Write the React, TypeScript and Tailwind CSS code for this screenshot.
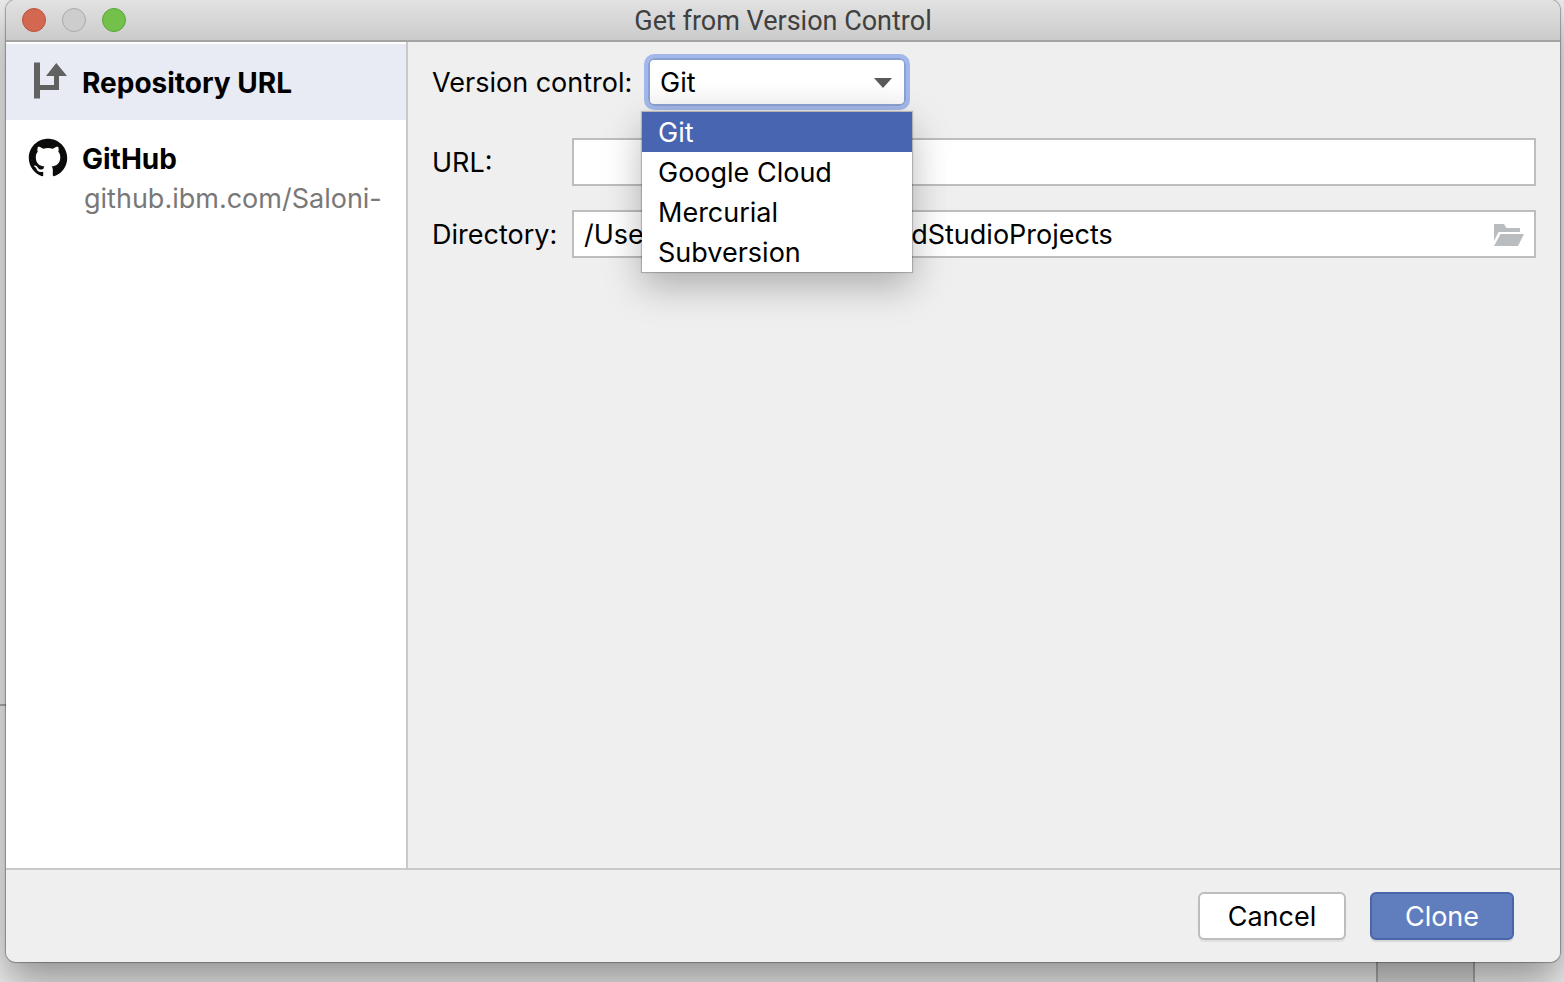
import React, { useState } from "react";

const systems = ["Git", "Google Cloud", "Mercurial", "Subversion"];

function BranchIcon() {
  return (
    <svg width="40" height="40" viewBox="0 0 40 40" fill="#616161" aria-hidden="true">
      <path d="M6 .5h6v22.500h14V14h-8L28.300 1 39 14h-8v14H12v8.500H6z" />
    </svg>
  );
}

function GitHubIcon() {
  return (
    <svg width="40" height="40" viewBox="0 0 16 16" fill="#0b0b0a" aria-hidden="true">
      <path
        transform="translate(.32 .32) scale(.96)"
        d="M8 0C3.58 0 0 3.58 0 8c0 3.54 2.29 6.53 5.47 7.59.4.07.55-.17.55-.38 0-.19-.01-.82-.01-1.49-2.01.37-2.53-.49-2.69-.94-.09-.23-.48-.94-.82-1.13-.28-.15-.68-.52-.01-.53.63-.01 1.08.58 1.23.82.72 1.21 1.87.87 2.33.66.07-.52.28-.87.51-1.07-1.78-.2-3.64-.89-3.64-3.95 0-.87.31-1.59.82-2.15-.08-.2-.36-1.02.08-2.12 0 0 .67-.21 2.2.82.64-.18 1.32-.27 2-.27s1.36.09 2 .27c1.53-1.04 2.2-.82 2.2-.82.44 1.1.16 1.92.08 2.12.51.56.82 1.27.82 2.15 0 3.07-1.87 3.75-3.65 3.95.29.25.54.73.54 1.48 0 1.07-.01 1.93-.01 2.2 0 .21.15.46.55.38A8.01 8.01 0 0 0 16 8c0-4.42-3.58-8-8-8z"
      />
    </svg>
  );
}

function FolderIcon() {
  return (
    <svg width="30" height="22" viewBox="0 0 30 22" fill="#b9bdc0" aria-hidden="true">
      <path d="M0 0h10l2.500 4H26v4H4.500L0 17z" />
      <path d="M6.500 10H30l-6 12H0z" />
    </svg>
  );
}

function TitleBar() {
  return (
    <header className="grid h-[42px] shrink-0 grid-cols-[1fr_auto_1fr] items-center border-b-2 border-[#a3a3a3] bg-linear-to-b from-[#e2e2e2] to-[#cbcbcb] px-4">
      <div className="flex gap-4">
        <button aria-label="Close" className="size-6 rounded-full border border-[#b9533c] bg-[#d1684f]" />
        <button aria-label="Minimize" className="size-6 rounded-full border border-[#a9a9a9] bg-[#cdcdcd]" />
        <button aria-label="Zoom" className="size-6 rounded-full border border-[#58a536] bg-[#73c04a]" />
      </div>
      <h1 className="pt-0.5 font-[Roboto,sans-serif] leading-8 text-[#404040]">Get from Version Control</h1>
    </header>
  );
}

function Sidebar() {
  return (
    <nav className="w-[402px] shrink-0 border-r-2 border-[#c9c9c9] bg-white pt-0.5">
      <button className="flex h-[76px] w-full items-center gap-3.5 bg-[#e8ebf3] px-[22px] text-left">
        <BranchIcon />
        <span className="pt-0.5 text-[28px] font-bold">Repository URL</span>
      </button>
      <button className="grid w-full grid-cols-[40px_1fr] items-center gap-x-3.5 px-[22px] pt-[18px] text-left">
        <GitHubIcon />
        <span className="pt-0.5 text-[28px] font-bold">GitHub</span>
        <span className="col-start-2 overflow-hidden whitespace-nowrap pt-px pl-0.5 leading-10 text-[#787878]">
          github.ibm.com/Saloni-
        </span>
      </button>
    </nav>
  );
}

function VersionControlSelect() {
  const [value, setValue] = useState("Git");
  return (
    <div className="relative w-[258px]">
      <select
        id="vcs"
        value={value}
        onChange={(e) => setValue(e.target.value)}
        className="h-12 w-full appearance-none rounded-md border-2 border-[#8aa0d0] bg-linear-to-b from-white from-50% to-[#f7f7f7] px-2.5 pt-0.5 outline-4 outline-[#a2b8ea]"
      >
        {systems.map((s) => (
          <option key={s}>{s}</option>
        ))}
      </select>
      <svg className="pointer-events-none absolute top-5 right-3.5" width="18" height="10" viewBox="0 0 18 10" fill="#595959" aria-hidden="true">
        <path d="M0 0h18L9 10z" />
      </svg>
      <ul
        role="listbox"
        aria-label="Version control systems"
        className="absolute top-[54px] -left-1.5 z-10 w-[270px] bg-white shadow-[0_0_1px_1px_rgba(0,0,0,0.2),0_14px_36px_rgba(0,0,0,0.28)]"
      >
        {systems.map((s) => (
          <li
            key={s}
            role="option"
            aria-selected={s === value}
            onClick={() => setValue(s)}
            className="h-10 px-4 leading-[42px] aria-selected:bg-[#4765b0] aria-selected:text-white"
          >
            {s}
          </li>
        ))}
      </ul>
    </div>
  );
}

function CloneForm() {
  return (
    <main className="min-w-0 flex-1 px-6 pt-4">
      <div className="grid grid-cols-[204px_1fr] items-center gap-x-3">
        <label htmlFor="vcs" className="pt-0.5">Version control:</label>
        <VersionControlSelect />
      </div>
      <div className="mt-8 grid grid-cols-[128px_1fr] items-center gap-x-3 gap-y-6">
        <label htmlFor="url" className="pt-0.5">URL:</label>
        <input id="url" className="h-12 w-full border-2 border-[#bdbdbd] bg-white px-2.5 outline-none" />
        <label htmlFor="directory" className="pt-0.5">Directory:</label>
        <div className="flex h-12 items-center border-2 border-[#bdbdbd] bg-white px-2.5">
          <input
            id="directory"
            defaultValue="/Users/workspace/AndroidStudioProjects"
            className="min-w-0 flex-1 bg-transparent pt-0.5 outline-none"
          />
          <button aria-label="Browse" className="pt-0.5">
            <FolderIcon />
          </button>
        </div>
      </div>
    </main>
  );
}

export default function App() {
  return (
    <div className="flex min-h-screen flex-col overflow-hidden bg-[#ededed] font-[Inter,sans-serif] text-[27px] leading-8 text-black">
      <div className="flex flex-1 pr-1">
        <div className="flex w-1.5 shrink-0 flex-col">
          <div className="box-content h-[704px] border-b-2 border-[#a8a8a8]" />
        </div>
        <div className="relative z-10 flex min-w-0 flex-1 flex-col rounded-[10px] shadow-[0_0_1px_1px_rgba(0,0,0,0.3),0_20px_40px_rgba(0,0,0,0.38)]">
          <div className="flex flex-1 flex-col overflow-hidden rounded-[10px] bg-[#efefef]">
            <TitleBar />
            <div className="flex flex-1">
              <Sidebar />
              <CloneForm />
            </div>
            <footer className="flex h-[94px] justify-end gap-6 border-t-2 border-[#c9c9c9] pt-[22px] pr-[46px]">
              <button className="h-12 w-[148px] rounded-md border-2 border-[#bdbdbd] bg-white pt-0.5 shadow-[0_2px_1px_rgba(0,0,0,0.06)]">
                Cancel
              </button>
              <button className="h-12 w-36 rounded-md border-2 border-[#4a66a8] bg-[#607dbd] pt-0.5 text-white shadow-[0_2px_1px_rgba(0,0,0,0.1)]">
                Clone
              </button>
            </footer>
          </div>
        </div>
      </div>
      <div className="flex h-5 justify-end pr-[89px]">
        <div className="w-[99px] border-x-2 border-[#a8a8a8] bg-[#d8d8d8]" />
      </div>
    </div>
  );
}
